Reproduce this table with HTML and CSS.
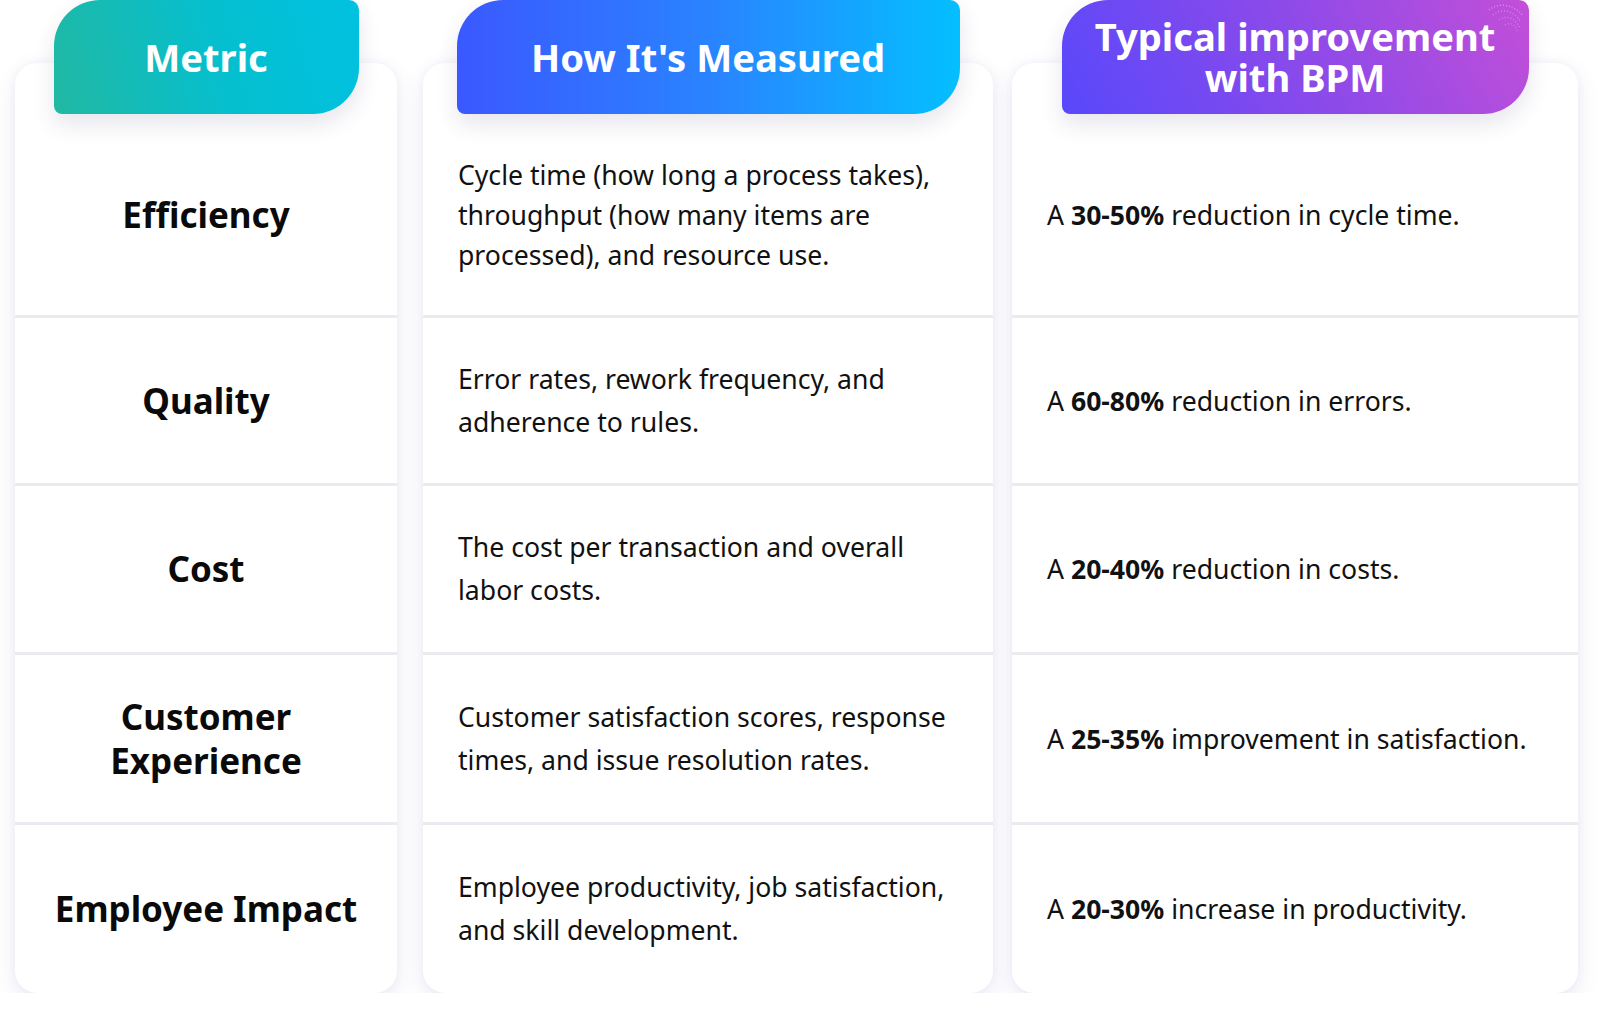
FILE: index.html
```html
<!DOCTYPE html>
<html lang="en">
<head>
<meta charset="utf-8">
<title>BPM Metrics</title>
<link rel="stylesheet" href="styles.css">
</head>
<body>
<main class="table">
  <section class="col col-metric">
    <div class="head head-metric"><span>Metric</span></div>
    <div class="card">
      <div class="row r1 label">Efficiency</div>
      <div class="row r2 label">Quality</div>
      <div class="row r3 label">Cost</div>
      <div class="row r4 label">Customer<br>Experience</div>
      <div class="row r5 label">Employee Impact</div>
    </div>
  </section>

  <section class="col col-measure">
    <div class="head head-measure"><span>How It's Measured</span></div>
    <div class="card">
      <div class="row r1 desc">Cycle time (how long a process takes), throughput (how many items are processed), and resource use.</div>
      <div class="row r2 desc">Error rates, rework frequency, and adherence to rules.</div>
      <div class="row r3 desc">The cost per transaction and overall labor costs.</div>
      <div class="row r4 desc">Customer satisfaction scores, response times, and issue resolution rates.</div>
      <div class="row r5 desc">Employee productivity, job satisfaction, and skill development.</div>
    </div>
  </section>

  <section class="col col-improve">
    <div class="head head-improve">
      <span>Typical improvement with BPM</span>
      <svg class="deco" width="40" height="34" viewBox="0 0 40 34" aria-hidden="true">
        <path d="M2 8 C12 0 26 2 36 14" fill="none" stroke="rgba(255,255,255,0.35)" stroke-width="1.5" stroke-dasharray="1 2"/>
        <path d="M6 13 C15 6 26 8 34 20" fill="none" stroke="rgba(255,255,255,0.3)" stroke-width="1.5" stroke-dasharray="1 2"/>
        <path d="M12 18 C19 13 27 15 33 26" fill="none" stroke="rgba(255,255,255,0.28)" stroke-width="1.5" stroke-dasharray="1 2"/>
        <path d="M18 23 C23 20 28 22 31 30" fill="none" stroke="rgba(255,255,255,0.25)" stroke-width="1.5" stroke-dasharray="1 2"/>
      </svg>
    </div>
    <div class="card">
      <div class="row r1 result">A&nbsp;<b>30-50%</b>&nbsp;reduction in cycle time.</div>
      <div class="row r2 result">A&nbsp;<b>60-80%</b>&nbsp;reduction in errors.</div>
      <div class="row r3 result">A&nbsp;<b>20-40%</b>&nbsp;reduction in costs.</div>
      <div class="row r4 result">A&nbsp;<b>25-35%</b>&nbsp;improvement in satisfaction.</div>
      <div class="row r5 result">A&nbsp;<b>20-30%</b>&nbsp;increase in productivity.</div>
    </div>
  </section>
</main>
</body>
</html>
```

FILE: styles.css
```css
html, body {
  margin: 0;
  padding: 0;
  background: #ffffff;
}

body {
  font-family: "Noto Sans", "Open Sans", "DejaVu Sans", sans-serif;
  color: #111111;
}

.table {
  display: flex;
  align-items: flex-start;
  padding-left: 15px;
}

.col {
  display: flex;
  flex-direction: column;
  align-items: center;
}

.col-metric { width: 382px; margin-right: 26px; }
.col-measure { width: 570px; margin-right: 19px; }
.col-improve { width: 566px; }

.head {
  position: relative;
  z-index: 2;
  box-sizing: border-box;
  height: 114px;
  display: flex;
  align-items: center;
  justify-content: center;
  text-align: center;
  color: #ffffff;
  font-weight: 700;
  font-size: 38.2px;
  line-height: 41px;
  border-radius: 46px 10px 46px 8px;
  box-shadow: 0 10px 22px rgba(50, 50, 110, 0.12);
}

.head-metric {
  width: 305px;
  background: linear-gradient(75deg, #21b8a2 0%, #05bfcf 55%, #00c1e0 100%);
}

.head-measure {
  width: 503px;
  background: linear-gradient(90deg, #3b58ff 0%, #2a83ff 50%, #04bfff 100%);
}

.head-improve {
  width: 467px;
  padding: 0 8px;
  background: linear-gradient(60deg, #5848fb 0%, #8a4aea 50%, #c34fd8 100%);
}

.deco {
  position: absolute;
  top: 2px;
  right: 2px;
}

.card {
  width: 100%;
  margin-top: -51px;
  background: #ffffff;
  border-radius: 22px;
  box-shadow: 0 8px 22px rgba(90, 90, 170, 0.12), 0 0 8px rgba(90, 90, 170, 0.06);
}

.row {
  box-sizing: border-box;
  display: flex;
  align-items: center;
  border-bottom: 3px solid #ebebef;
}

.r1 { height: 255px; padding-top: 52px; }
.r2 { height: 168px; }
.r3 { height: 169px; }
.r4 { height: 170px; }
.r5 { height: 168px; border-bottom: 0; }

.label {
  justify-content: center;
  text-align: center;
  font-size: 35px;
  font-weight: 700;
  line-height: 44px;
  color: #0a0a0a;
}

.desc {
  padding-left: 35px;
  padding-right: 40px;
  font-size: 26.6px;
  line-height: 43px;
}

.desc.r1 {
  line-height: 40px;
}

.result {
  padding-left: 35px;
  font-size: 26.6px;
  line-height: 36px;
  white-space: nowrap;
}

.result b {
  font-weight: 700;
}
```
